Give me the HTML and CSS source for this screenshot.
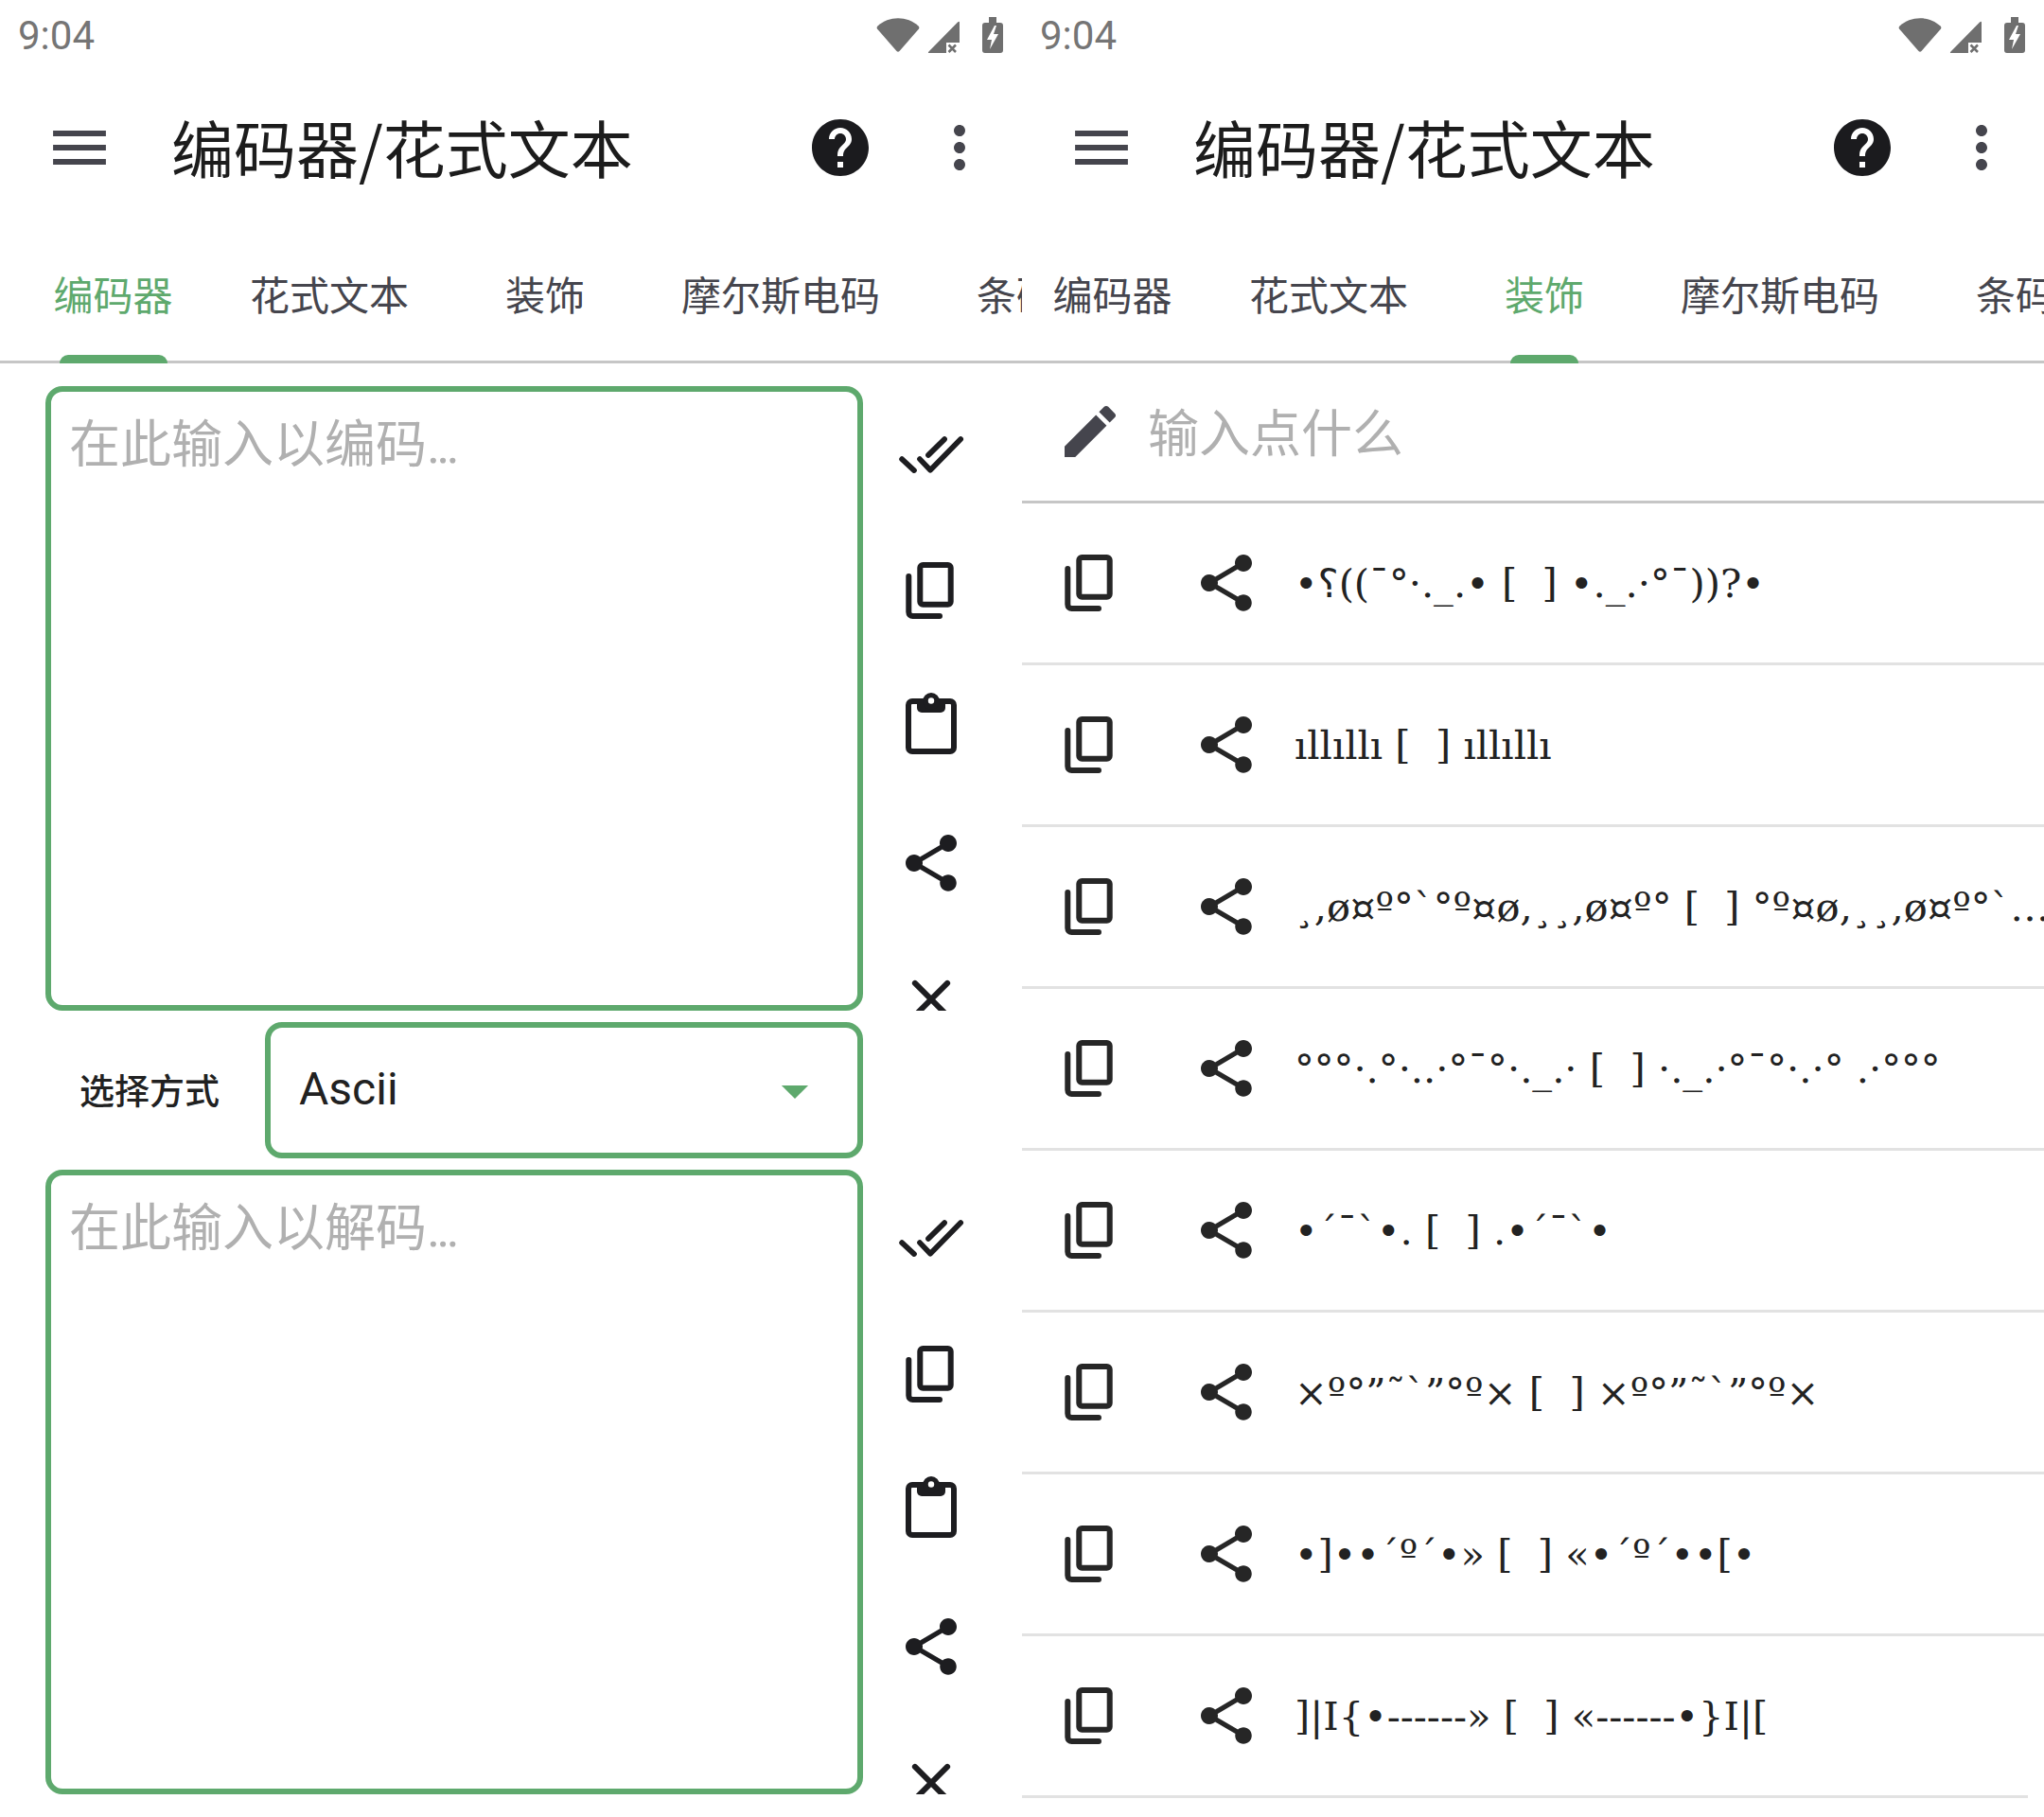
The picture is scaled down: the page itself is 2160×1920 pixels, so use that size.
FILE: index.html
```html
<!DOCTYPE html>
<html lang="zh-CN">
<head>
<meta charset="utf-8">
<title>编码器/花式文本</title>
<link rel="stylesheet" href="styles.css">
</head>
<body>
<svg class="defs" width="0" height="0" aria-hidden="true">
  <symbol id="i-copy" viewBox="0 0 24 24">
    <rect x="8.1" y="3" width="10.8" height="13.9" rx="1" fill="none" stroke="currentColor" stroke-width="2"/>
    <path d="M4.1 7V19.6a1.4 1.4 0 0 0 1.4 1.4H15" fill="none" stroke="currentColor" stroke-width="2" stroke-linecap="round"/>
  </symbol>
  <symbol id="i-share" viewBox="0 0 24 24">
    <path fill="currentColor" d="M18 16.08c-.76 0-1.44.3-1.96.77L8.91 12.7c.05-.23.09-.46.09-.7s-.04-.47-.09-.7l7.05-4.11c.54.5 1.25.81 2.04.81 1.66 0 3-1.34 3-3s-1.34-3-3-3-3 1.34-3 3c0 .24.04.47.09.7L8.04 9.81C7.5 9.31 6.79 9 6 9c-1.66 0-3 1.34-3 3s1.34 3 3 3c.79 0 1.5-.31 2.04-.81l7.12 4.16c-.05.21-.08.43-.08.65 0 1.61 1.31 2.92 2.92 2.92 1.61 0 2.92-1.31 2.92-2.92s-1.31-2.92-2.92-2.92z"/>
  </symbol>
  <symbol id="i-check" viewBox="0 0 24 24">
    <path d="M1.7 13.7L6 17.7M8 13.7L11.7 17.6L22.4 6.7M11 12.3L16.7 6.7" fill="none" stroke="currentColor" stroke-width="1.9" stroke-linecap="round" stroke-linejoin="round"/>
  </symbol>
  <symbol id="i-paste" viewBox="0 0 72 72">
    <rect x="12" y="9" width="48" height="53" rx="4" fill="none" stroke="currentColor" stroke-width="6"/>
    <path fill="currentColor" d="M21 6H51V16a5 5 0 0 1-5 5H26a5 5 0 0 1-5-5Z"/>
    <circle cx="36" cy="9" r="9" fill="currentColor"/>
    <circle cx="36" cy="8.5" r="3.2" fill="#fff"/>
  </symbol>
  <symbol id="i-close" viewBox="0 0 24 24">
    <path d="M6.3 6.3L17.7 17.7M17.7 6.3L6.3 17.7" fill="none" stroke="currentColor" stroke-width="2" stroke-linecap="round"/>
  </symbol>
  <symbol id="i-menu" viewBox="0 0 24 24"><path fill="currentColor" d="M2.700 18h18.600v-2H2.700v2zm0-5h18.600v-2H2.700v2zm0-7v2h18.600V6H2.700z"/></symbol>
  <symbol id="i-help" viewBox="0 0 24 24"><path fill="currentColor" d="M12 2C6.48 2 2 6.48 2 12s4.48 10 10 10 10-4.48 10-10S17.52 2 12 2zm1 17h-2v-2h2v2zm2.07-7.75l-.9.92C13.45 12.9 13 13.5 13 15h-2v-.5c0-1.1.45-2.1 1.17-2.83l1.24-1.26c.37-.36.59-.86.59-1.41 0-1.1-.9-2-2-2s-2 .9-2 2H8c0-2.21 1.79-4 4-4s4 1.79 4 4c0 .88-.36 1.68-.93 2.25z"/></symbol>
  <symbol id="i-more" viewBox="0 0 24 24"><path fill="currentColor" d="M12 8c1.1 0 2-.9 2-2s-.9-2-2-2-2 .9-2 2 .9 2 2 2zm0 2c-1.1 0-2 .9-2 2s.9 2 2 2 2-.9 2-2-.9-2-2-2zm0 6c-1.1 0-2 .9-2 2s.9 2 2 2 2-.9 2-2-.9-2-2-2z"/></symbol>
  <symbol id="i-edit" viewBox="0 0 24 24"><path fill="currentColor" d="M3 17.25V21h3.75L17.81 9.94l-3.75-3.75L3 17.25zM20.71 7.04c.39-.39.39-1.02 0-1.41l-2.34-2.34c-.39-.39-1.02-.39-1.41 0l-1.83 1.83 3.75 3.75 1.83-1.83z"/></symbol>
  <symbol id="i-status" viewBox="0 0 134 38">
    <path fill="currentColor" d="M1.500 9.500C13-1.500 33-1.500 44.500 9.500Q46 11 45 12.500L24.500 36Q23 37.500 21.500 36L1 12.500Q0 11 1.500 9.500Z"/>
    <path fill="currentColor" d="M86 5.500Q88 4 88 6V38H56Q54 38 55.500 36.500Z"/>
    <rect x="74" y="27" width="14" height="11" fill="#fff"/>
    <path d="M76.500 29.500L84 37M84 29.500L76.500 37" fill="none" stroke="currentColor" stroke-width="2.500"/>
    <path fill="currentColor" d="M119 0H127V6H131Q134 6 134 9V35Q134 38 131 38H115Q112 38 112 35V9Q112 6 115 6H119Z"/>
    <path fill="#fff" d="M125 9L117 24H122L120 34L129 18H124L127 9Z"/>
  </symbol>
  <symbol id="i-drop" viewBox="0 0 24 24"><path fill="currentColor" d="M7.300 10.300l4.700 4.700 4.700-4.700z"/></symbol>
</svg>
<main class="screens">
  <section class="screen">
    <div class="status"><span class="time">9:04</span><svg class="status-icons"><use href="#i-status"/></svg></div>
    <header class="toolbar">
      <svg class="icon icon-dark"><use href="#i-menu"/></svg>
      <h1 class="title">编码器/花式文本</h1>
      <svg class="icon icon-black help"><use href="#i-help"/></svg>
      <svg class="icon icon-dark more"><use href="#i-more"/></svg>
    </header>
    <nav class="tabs tabs-a">
      <span class="tab active"><span class="tab-label">编码器</span></span>
      <span class="tab"><span class="tab-label">花式文本</span></span>
      <span class="tab"><span class="tab-label">装饰</span></span>
      <span class="tab"><span class="tab-label">摩尔斯电码</span></span>
      <span class="tab"><span class="tab-label">条码</span></span>
    </nav>
    <div class="encoder">
      <div class="fields">
        <div class="box area"><span class="placeholder">在此输入以编码<span class="dots">...</span></span></div>
        <div class="method">
          <span class="method-label">选择方式</span>
          <div class="box select"><span class="select-value">Ascii</span><svg class="icon drop"><use href="#i-drop"/></svg></div>
        </div>
        <div class="box area"><span class="placeholder">在此输入以解码<span class="dots">...</span></span></div>
      </div>
      <div class="rails">
        <div class="rail">
          <svg class="icon rail-icon"><use href="#i-check"/></svg>
          <svg class="icon rail-icon"><use href="#i-copy"/></svg>
          <svg class="icon rail-icon"><use href="#i-paste"/></svg>
          <svg class="icon rail-icon"><use href="#i-share"/></svg>
          <svg class="icon rail-icon"><use href="#i-close"/></svg>
        </div>
        <div class="rail">
          <svg class="icon rail-icon"><use href="#i-check"/></svg>
          <svg class="icon rail-icon"><use href="#i-copy"/></svg>
          <svg class="icon rail-icon"><use href="#i-paste"/></svg>
          <svg class="icon rail-icon"><use href="#i-share"/></svg>
          <svg class="icon rail-icon"><use href="#i-close"/></svg>
        </div>
      </div>
    </div>
  </section>
  <section class="screen">
    <div class="status"><span class="time">9:04</span><svg class="status-icons"><use href="#i-status"/></svg></div>
    <header class="toolbar">
      <svg class="icon icon-dark"><use href="#i-menu"/></svg>
      <h1 class="title">编码器/花式文本</h1>
      <svg class="icon icon-black help"><use href="#i-help"/></svg>
      <svg class="icon icon-dark more"><use href="#i-more"/></svg>
    </header>
    <nav class="tabs tabs-b">
      <span class="tab"><span class="tab-label">编码器</span></span>
      <span class="tab"><span class="tab-label">花式文本</span></span>
      <span class="tab active"><span class="tab-label">装饰</span></span>
      <span class="tab"><span class="tab-label">摩尔斯电码</span></span>
      <span class="tab"><span class="tab-label">条码</span></span>
    </nav>
    <div class="search">
      <svg class="icon icon-dark pencil"><use href="#i-edit"/></svg>
      <span class="search-text">输入点什么</span>
    </div>
    <ul class="list">
      <li class="row"><svg class="icon row-icon"><use href="#i-copy"/></svg><svg class="icon row-icon share"><use href="#i-share"/></svg><span class="deco">•؟((¯°·._.• [&nbsp;&nbsp;] •._.·°¯))?•</span></li>
      <li class="row"><svg class="icon row-icon"><use href="#i-copy"/></svg><svg class="icon row-icon share"><use href="#i-share"/></svg><span class="deco">ıllıllı [&nbsp;&nbsp;] ıllıllı</span></li>
      <li class="row"><svg class="icon row-icon"><use href="#i-copy"/></svg><svg class="icon row-icon share"><use href="#i-share"/></svg><span class="deco">¸,ø¤º°`°º¤ø,¸¸,ø¤º° [&nbsp;&nbsp;] °º¤ø,¸¸,ø¤º°`°º¤ø,¸¸,ø¤º°</span></li>
      <li class="row"><svg class="icon row-icon"><use href="#i-copy"/></svg><svg class="icon row-icon share"><use href="#i-share"/></svg><span class="deco">°°°·.°·..·°¯°·._.· [&nbsp;&nbsp;] ·._.·°¯°·.·° .·°°°</span></li>
      <li class="row"><svg class="icon row-icon"><use href="#i-copy"/></svg><svg class="icon row-icon share"><use href="#i-share"/></svg><span class="deco">•´¯`•. [&nbsp;&nbsp;] .•´¯`•</span></li>
      <li class="row"><svg class="icon row-icon"><use href="#i-copy"/></svg><svg class="icon row-icon share"><use href="#i-share"/></svg><span class="deco">×º°”˜`”°º× [&nbsp;&nbsp;] ×º°”˜`”°º×</span></li>
      <li class="row"><svg class="icon row-icon"><use href="#i-copy"/></svg><svg class="icon row-icon share"><use href="#i-share"/></svg><span class="deco">•]••´º´•» [&nbsp;&nbsp;] «•´º´••[•</span></li>
      <li class="row"><svg class="icon row-icon"><use href="#i-copy"/></svg><svg class="icon row-icon share"><use href="#i-share"/></svg><span class="deco">]|I{•------» [&nbsp;&nbsp;] «------•}I|[</span></li>
    </ul>
  </section>
</main>
</body>
</html>
```
FILE: styles.css
```css
* { box-sizing: border-box; }
html, body { margin: 0; padding: 0; background: #fff; }
body { width: 2160px; height: 1920px; overflow: hidden; font-family: "Noto Sans CJK SC", "Noto Sans", sans-serif; color: #212121; }
.defs { position: absolute; }
.screens { display: flex; width: 2160px; height: 1920px; }
.screen { width: 1080px; height: 1920px; overflow: hidden; flex: none; }
.icon { width: 72px; height: 72px; display: block; flex: none; }
.icon-dark { color: #45454d; }
.icon-black { color: #1b1b1e; }

.status { height: 72px; padding: 4px 20px 0 19px; display: flex; align-items: center; justify-content: space-between; color: #6f6f6f; }
.time { font-family: Roboto, sans-serif; font-size: 42px; line-height: 68px; color: #757575; }
.status-icons { width: 134px; height: 38px; margin-top: -3px; }

.toolbar { height: 168px; padding: 0 30px 0 48px; display: flex; align-items: center; }
.title { margin: 0 0 5px 61px; flex: 1; font-size: 66px; font-weight: 400; line-height: 1; color: #1c1c1c; white-space: nowrap; }
.more { margin-left: 54px; }

.tabs { height: 144px; display: flex; border-bottom: 3px solid #c6c6c6; overflow: visible; }
.tabs-a { padding-left: 16px; }
.tabs-b { padding-left: 0; }
.tabs-b .tab:first-child { margin-left: -8px; }
.tab { position: relative; flex: none; min-width: 206px; padding: 0 41px; height: 144px; display: flex; justify-content: center; align-items: center; font-size: 42px; line-height: 1; color: #45454d; }
.tab:first-child { padding: 0 40.5px; }
.tab-label { position: relative; height: 144px; line-height: 140px; white-space: nowrap; }
.tab.active { color: #5ea96d; }
.tab.active .tab-label::after { content: ""; position: absolute; left: 6px; right: 6px; bottom: 0; height: 9px; background: #5ea96d; border-radius: 9px 9px 0 0; }

.encoder { display: flex; padding: 24px 0 0 48px; }
.fields { width: 864px; flex: none; display: flex; flex-direction: column; gap: 12px; }
.box { border: 6px solid #5ea96d; border-radius: 18px; }
.area { height: 660px; padding: 23px 19px; }
.placeholder { font-family: Roboto, "Noto Sans CJK SC", sans-serif; font-size: 54px; line-height: 68px; color: #b0b0b0; }
.dots { letter-spacing: -4px; }
.method { height: 144px; display: flex; align-items: center; }
.method-label { width: 232px; padding-left: 36px; margin-bottom: 3px; font-size: 37px; font-weight: 500; color: #212121; }
.select { width: 632px; height: 144px; display: flex; align-items: center; justify-content: space-between; padding: 0 30px; }
.select-value { font-family: Roboto, sans-serif; font-size: 48px; margin-bottom: 3px; color: #212121; }
.drop { color: #5ea96d; }

.rails { margin-left: 36px; display: flex; flex-direction: column; gap: 168px; }
.rail { height: 660px; overflow: hidden; display: flex; flex-direction: column; padding-top: 36px; gap: 72px; }
.rail-icon { color: #1d1d20; }

.search { height: 148px; padding-left: 36px; display: flex; align-items: center; gap: 25px; border-bottom: 3px solid #c6c6c6; }
.pencil { margin-bottom: 2px; }
.search-text { font-size: 54px; line-height: 1; margin-bottom: 3px; color: #b0b0b0; }

.list { margin: 0; padding: 0; list-style: none; }
.row { height: 171px; padding: 0 0 1px 36px; display: flex; align-items: center; gap: 72px; border-bottom: 3px solid #e2e2e2; color: #262626; white-space: nowrap; }
.row:last-child { margin-right: 17px; }
.deco { margin: 2px -13px 0 -36px; flex: 1; min-width: 0; overflow: hidden; text-overflow: ellipsis; font-family: "DejaVu Serif", "DejaVu Sans", serif; font-size: 41.6px; line-height: 60px; color: #222; }
```
